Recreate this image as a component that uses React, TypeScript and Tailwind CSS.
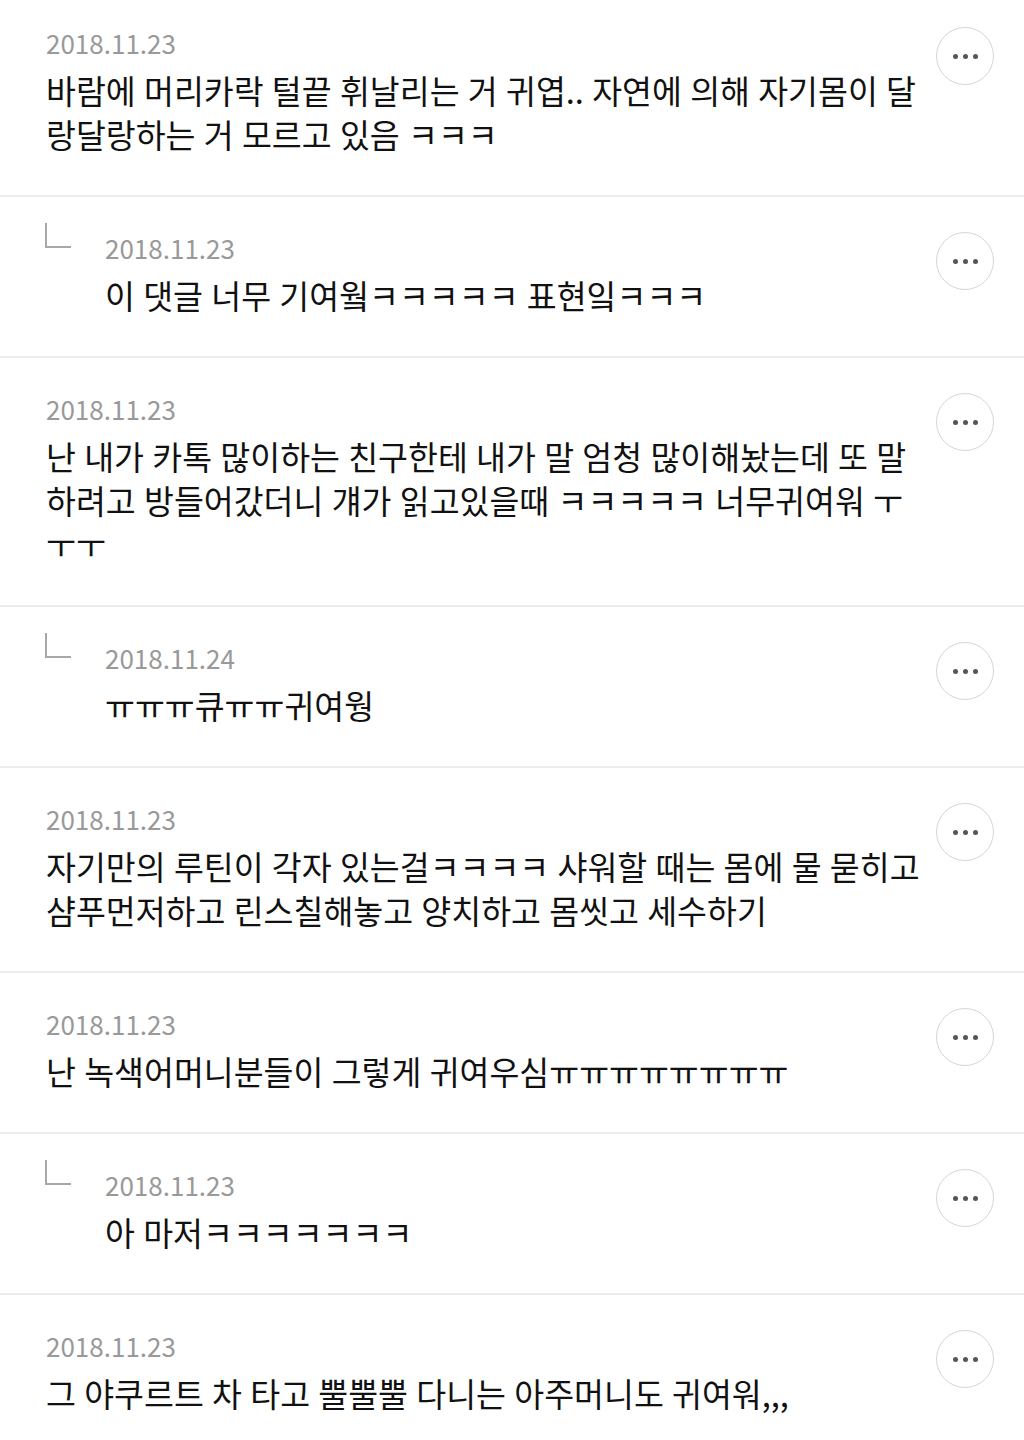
import type { ReactNode } from 'react'

type Comment = {
  date: string
  text: string
  reply?: boolean
}

const comments: Comment[] = [
  {
    date: '2018.11.23',
    text: '바람에 머리카락 털끝 휘날리는 거 귀엽.. 자연에 의해 자기몸이 달랑달랑하는 거 모르고 있음 ㅋㅋㅋ',
  },
  { date: '2018.11.23', text: '이 댓글 너무 기여웤ㅋㅋㅋㅋㅋ 표현잌ㅋㅋㅋ', reply: true },
  {
    date: '2018.11.23',
    text: '난 내가 카톡 많이하는 친구한테 내가 말 엄청 많이해놨는데 또 말하려고 방들어갔더니 걔가 읽고있을때 ㅋㅋㅋㅋㅋ 너무귀여워 ㅜㅜㅜ',
  },
  { date: '2018.11.24', text: 'ㅠㅠㅠ큐ㅠㅠ귀여웡', reply: true },
  {
    date: '2018.11.23',
    text: '자기만의 루틴이 각자 있는걸ㅋㅋㅋㅋ 샤워할 때는 몸에 물 묻히고 샴푸먼저하고 린스칠해놓고 양치하고 몸씻고 세수하기',
  },
  { date: '2018.11.23', text: '난 녹색어머니분들이 그렇게 귀여우심ㅠㅠㅠㅠㅠㅠㅠㅠ' },
  { date: '2018.11.23', text: '아 마저ㅋㅋㅋㅋㅋㅋㅋ', reply: true },
  { date: '2018.11.23', text: '그 야쿠르트 차 타고 뿔뿔뿔 다니는 아주머니도 귀여워,,,' },
]

function MoreButton() {
  return (
    <button className="-mt-[2px] flex h-[58px] w-[58px] shrink-0 items-center justify-center gap-[5px] rounded-full border border-[#d6d6d6] bg-white">
      <span className="h-[5px] w-[5px] rounded-full bg-[#555]" />
      <span className="h-[5px] w-[5px] rounded-full bg-[#555]" />
      <span className="h-[5px] w-[5px] rounded-full bg-[#555]" />
    </button>
  )
}

function ReplyMark() {
  return (
    <svg width="26" height="26" viewBox="0 0 26 26" className="-mt-[11px] -ml-px" fill="none">
      <path d="M1 0 V24 H26" stroke="#a8a8a8" strokeWidth="2" />
    </svg>
  )
}

function Body({ date, text }: { date: string; text: ReactNode }) {
  return (
    <div className="min-w-0 flex-1 pr-[4px]">
      <div className="-mt-[2px] text-[26px] leading-[32px] text-[#999]">{date}</div>
      <p className="mt-[9px] text-[32.5px] leading-[44px] text-[#111] [word-spacing:1px]">{text}</p>
    </div>
  )
}

export default function App() {
  return (
    <div className="min-h-screen bg-white font-['Noto_Sans_CJK_KR','Noto_Sans',sans-serif]">
      {comments.map((c, i) => (
        <div
          key={i}
          className={
            'flex border-b-2 border-[#ededed] pr-[30px] pb-[39px] pl-[46px] ' +
            (i === 0 ? 'pt-[29px]' : 'pt-[37px]')
          }
        >
          {c.reply && (
            <div className="w-[59px] shrink-0">
              <ReplyMark />
            </div>
          )}
          <Body date={c.date} text={c.text} />
          <MoreButton />
        </div>
      ))}
    </div>
  )
}
